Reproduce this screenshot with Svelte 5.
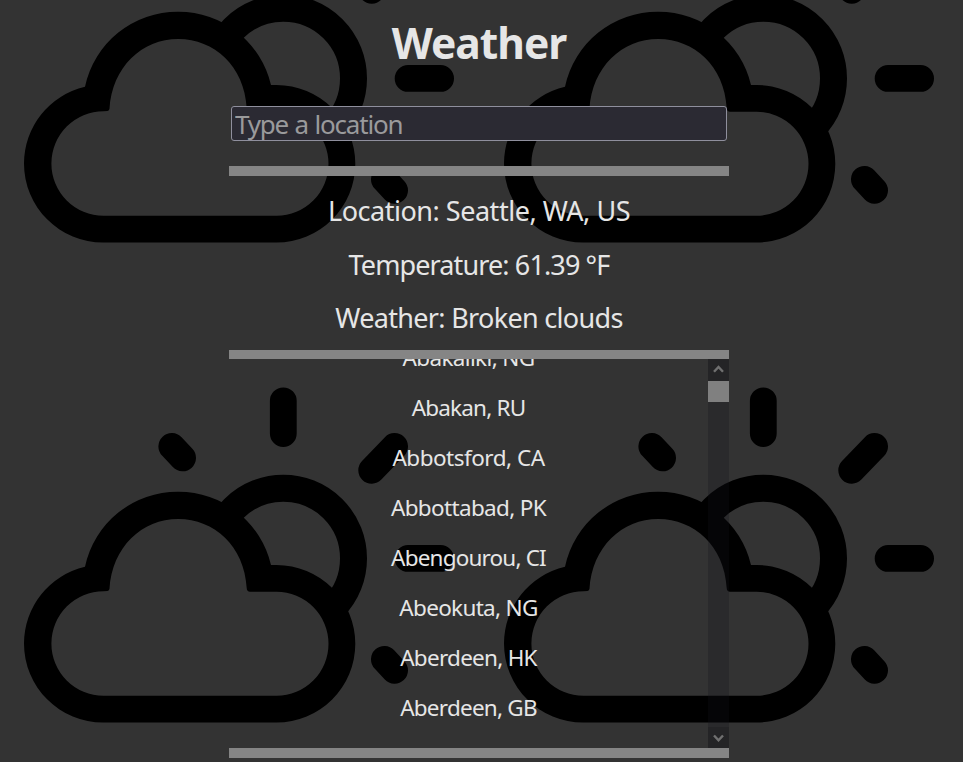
<script>
  const tiles = [[0, -480], [480, -480], [0, 0], [480, 0]];
  const details = [
    { text: 'Location: Seattle, WA, US', spacing: -0.47 },
    { text: 'Temperature: 61.39 °F', spacing: -0.88 },
    { text: 'Weather: Broken clouds', spacing: -0.68 }
  ];
  const cities = [
    { name: 'Abakaliki, NG', spacing: -0.65 },
    { name: 'Abakan, RU', spacing: -0.8 },
    { name: 'Abbotsford, CA', spacing: -0.5 },
    { name: 'Abbottabad, PK', spacing: -0.65 },
    { name: 'Abengourou, CI', spacing: -0.82 },
    { name: 'Abeokuta, NG', spacing: -0.68 },
    { name: 'Aberdeen, HK', spacing: -0.73 },
    { name: 'Aberdeen, GB', spacing: -0.76 }
  ];
</script>

<div class="page">
  <svg class="backdrop" width="963" height="762" viewBox="0 0 963 762" aria-hidden="true">
    {#each tiles as [x, y]}
      <g transform="translate({x} {y})">
        <circle cx="283.3" cy="558.4" r="70.2" fill="none" stroke="#000" stroke-width="27" />
        <path fill="#000" d="M103 722.5A79 79 0 0 1 24 643.5A79 79 0 0 1 85 566.7A94.8 94.8 0 0 1 178.3 491.7A94.8 94.8 0 0 1 271 565H276.5A78.8 78.8 0 0 1 355.3 643.8A78.8 78.8 0 0 1 276.5 722.5Z" />
        <path fill="#333" d="M103.6 695.8A52.3 52.3 0 0 1 51.4 643.5A52.3 52.3 0 0 1 103.6 591.2L107.5 591Q109.3 590.8 109.5 588.8C112 547 142 518.9 178.3 518.9C214 518.9 244.5 546 246.7 588Q246.9 591.8 250 591.8H276.5A52 52 0 0 1 276.5 695.8Z" />
        <path fill="none" stroke="#000" stroke-width="26.8" stroke-linecap="round" d="M283.3 400.8V433.6M171.8 446.4L182.6 457.9M394.6 446.4L371.7 470.3M408.1 558.4H440.6M384.4 659.4L394.6 670.3" />
      </g>
    {/each}
  </svg>

  <main>
    <h1>Weather</h1>
    <input type="text" placeholder="Type a location" aria-label="Location" />
    <section class="details">
      {#each details as d}
        <p style:letter-spacing="{d.spacing}px">{d.text}</p>
      {/each}
    </section>
    <section class="results">
      <div class="viewport">
        <ul>
          {#each cities as city}
            <li style:letter-spacing="{city.spacing}px">{city.name}</li>
          {/each}
        </ul>
      </div>
      <div class="scrollbar">
        <div class="arrow"><svg width="21" height="22" viewBox="0 0 21 22"><path d="M6 12.8L10.5 8L15 12.8" /></svg></div>
        <div class="thumb"></div>
        <div class="track"></div>
        <div class="arrow"><svg width="21" height="21" viewBox="0 0 21 21"><path d="M6 8.5L10.5 13.3L15 8.5" /></svg></div>
      </div>
    </section>
  </main>
</div>

<style>
  :global(body) { margin: 0; background: #333; }
  .page {
    position: relative;
    width: 963px;
    height: 762px;
    overflow: hidden;
    background: #333;
    color: #e6e6e6;
    font-family: 'Noto Sans', 'Open Sans', sans-serif;
  }
  .backdrop { position: absolute; inset: 0; }
  main {
    position: relative;
    display: flex;
    flex-direction: column;
    width: 500px;
    height: 758px;
    margin-left: 229px;
  }
  h1 {
    margin: 0;
    height: 106px;
    line-height: 86px;
    font-size: 42.5px;
    font-weight: 700;
    text-align: center;
    letter-spacing: -1px;
    white-space: nowrap;
  }
  input {
    box-sizing: border-box;
    width: 496px;
    height: 35px;
    margin: 0 2px 25px;
    padding: 1px 3px;
    border: 1px solid #8f8f9d;
    border-radius: 3px;
    background: #2b2a33;
    color: #e6e6e6;
    font: 26px 'Noto Sans', 'Open Sans', sans-serif;
    letter-spacing: -1.2px;
    word-spacing: 1px;
  }
  input::placeholder { color: #9a9a9c; opacity: 1; }
  .details {
    box-sizing: border-box;
    height: 193px;
    padding-top: 8px;
    border-top: 10px solid #858585;
    border-bottom: 9px solid #858585;
  }
  .details p {
    margin: 0;
    height: 53.5px;
    line-height: 53.5px;
    font-size: 27px;
    text-align: center;
    white-space: nowrap;
  }
  .results {
    display: flex;
    height: 389px;
    border-bottom: 10px solid #858585;
  }
  .viewport { flex: 1; overflow: hidden; }
  ul { margin: -26px 0 0; padding: 0; list-style: none; }
  li {
    height: 50px;
    line-height: 50px;
    font-size: 22.5px;
    text-align: center;
    white-space: nowrap;
  }
  .scrollbar {
    display: flex;
    flex-direction: column;
    width: 21px;
    background: rgba(19, 19, 27, 0.275);
  }
  .arrow { height: 22px; background: rgba(30, 30, 32, 0.5); }
  .arrow:last-child { height: 21px; }
  .arrow svg { display: block; }
  .arrow path { fill: none; stroke: #707070; stroke-width: 2.4; }
  .thumb { height: 21px; background: #808080; }
  .track { flex: 1; }
</style>
